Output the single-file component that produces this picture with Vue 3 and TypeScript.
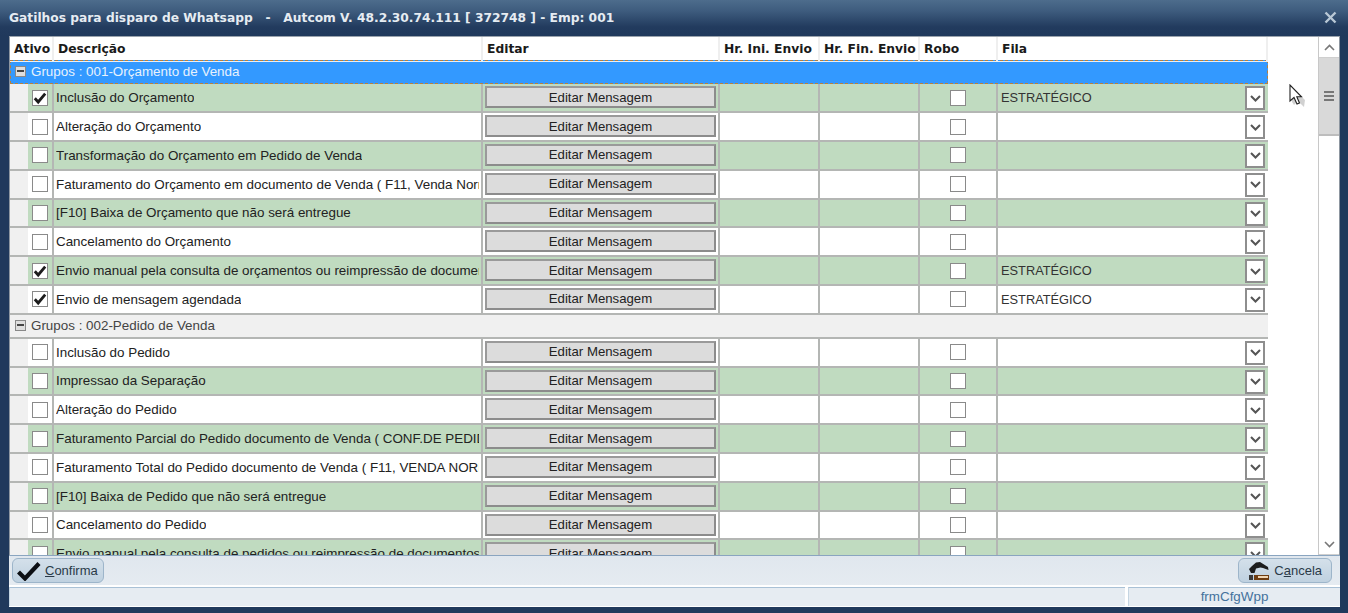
<script setup lang="ts">
interface Row {
  ativo: boolean
  text: string
  fila: string
}
interface Group {
  title: string
  selected: boolean
  firstGreen: boolean
  rows: Row[]
}

const columns = ['Descrição', 'Editar', 'Hr. Ini. Envio', 'Hr. Fin. Envio', 'Robo', 'Fila']

const groups: Group[] = [
  {
    title: 'Grupos : 001-Orçamento de Venda',
    selected: true,
    firstGreen: true,
    rows: [
      { ativo: true, text: 'Inclusão do Orçamento', fila: 'ESTRATÉGICO' },
      { ativo: false, text: 'Alteração do Orçamento', fila: '' },
      { ativo: false, text: 'Transformação do Orçamento em Pedido de Venda', fila: '' },
      { ativo: false, text: 'Faturamento do Orçamento em documento de Venda ( F11, Venda Normal )', fila: '' },
      { ativo: false, text: '[F10] Baixa de Orçamento que não será entregue', fila: '' },
      { ativo: false, text: 'Cancelamento do Orçamento', fila: '' },
      { ativo: true, text: 'Envio manual pela consulta de orçamentos ou reimpressão de documentos', fila: 'ESTRATÉGICO' },
      { ativo: true, text: 'Envio de mensagem agendada', fila: 'ESTRATÉGICO' },
    ],
  },
  {
    title: 'Grupos : 002-Pedido de Venda',
    selected: false,
    firstGreen: false,
    rows: [
      { ativo: false, text: 'Inclusão do Pedido', fila: '' },
      { ativo: false, text: 'Impressao da Separação', fila: '' },
      { ativo: false, text: 'Alteração do Pedido', fila: '' },
      { ativo: false, text: 'Faturamento Parcial do Pedido documento de Venda ( CONF.DE PEDIDO )', fila: '' },
      { ativo: false, text: 'Faturamento Total do Pedido documento de Venda ( F11, VENDA NORMAL )', fila: '' },
      { ativo: false, text: '[F10] Baixa de Pedido que não será entregue', fila: '' },
      { ativo: false, text: 'Cancelamento do Pedido', fila: '' },
      { ativo: false, text: 'Envio manual pela consulta de pedidos ou reimpressão de documentos', fila: '' },
    ],
  },
]

const isGreen = (g: Group, i: number) => (i % 2 === 0) === g.firstGreen
</script>

<template>
  <div class="window">
    <header class="titlebar">
      <span class="title">Gatilhos para disparo de Whatsapp &nbsp; - &nbsp; Autcom V. 48.2.30.74.111 [ 372748 ] - Emp: 001</span>
      <svg class="close" width="13" height="13" viewBox="0 0 13 13">
        <path d="M1.5 1.5 11.5 11.5M11.5 1.5 1.5 11.5" stroke="#b9c8d6" stroke-width="2.4" fill="none" />
      </svg>
    </header>

    <main class="body">
      <div class="grid-area">
        <div class="grid">
          <div class="row head">
            <div class="cell ativo-head">Ativo</div>
            <div v-for="c in columns" :key="c" class="cell">{{ c }}</div>
          </div>

          <template v-for="g in groups" :key="g.title">
            <div class="group" :class="{ selected: g.selected }">
              <span class="toggle"><i></i></span>
              {{ g.title }}
            </div>
            <div v-for="(r, i) in g.rows" :key="r.text" class="row item" :class="{ green: isGreen(g, i) }">
              <div class="indent"></div>
              <div class="cell check-cell">
                <span class="check">
                  <svg v-if="r.ativo" width="14" height="14" viewBox="0 0 14 14">
                    <path d="M1.8 7.2 5.2 11 12.2 2.6" stroke="#1c1c1c" stroke-width="2.8" fill="none" />
                  </svg>
                </span>
              </div>
              <div class="cell desc"><span>{{ r.text }}</span></div>
              <div class="cell edit"><button class="edit-btn">Editar Mensagem</button></div>
              <div class="cell"></div>
              <div class="cell"></div>
              <div class="cell center"><span class="check"></span></div>
              <div class="cell fila">
                <span>{{ r.fila }}</span>
                <span class="combo">
                  <svg width="11" height="7" viewBox="0 0 11 7">
                    <path d="M1 1 5.5 5.5 10 1" stroke="#555" stroke-width="2" fill="none" />
                  </svg>
                </span>
              </div>
            </div>
          </template>
        </div>

        <div class="scrollbar">
          <span class="arrow">
            <svg width="11" height="7" viewBox="0 0 11 7"><path d="M1 6 5.5 1.5 10 6" stroke="#777" stroke-width="1.6" fill="none" /></svg>
          </span>
          <span class="thumb"><i></i><i></i><i></i></span>
          <span class="track"></span>
          <span class="arrow">
            <svg width="11" height="7" viewBox="0 0 11 7"><path d="M1 1 5.5 5.5 10 1" stroke="#777" stroke-width="1.6" fill="none" /></svg>
          </span>
        </div>

        <svg class="cursor" width="18" height="24" viewBox="0 0 18 24">
          <path d="M3 3 16 16 15 23 9 17 5 21 3 18Z" fill="#000" opacity=".18" />
          <path d="M1 1V17L5 13.5 8 20 10.5 19 7.8 12.8H12.5Z" fill="#fff" stroke="#222" stroke-width="1.1" />
        </svg>
      </div>

      <div class="actions">
        <button class="action confirm">
          <svg width="24" height="20" viewBox="0 0 24 20">
            <path d="M1.5 11 8 17.5 22 2.5" stroke="#0c0f14" stroke-width="4.2" fill="none" />
          </svg>
          <span><u>C</u>onfirma</span>
        </button>
        <button class="action cancel">
          <svg width="22" height="20" viewBox="0 0 22 20">
            <path d="M1 8 4 5 8 1.5 12 1 20 6 20.5 9 15 7 12.5 6.5 8 7.5 6.5 12 3 12Z" fill="#1c1c1c" />
            <rect x="1" y="14" width="4" height="5" fill="#3a3a3a" />
            <rect x="6" y="14" width="15" height="5" fill="#6e3d12" />
            <rect x="10" y="15" width="10" height="2" fill="#f0d6b4" />
          </svg>
          <span>C<u>a</u>ncela</span>
        </button>
      </div>

      <footer class="status">
        <div class="status-main"></div>
        <div class="status-form">frmCfgWpp</div>
      </footer>
    </main>
  </div>
</template>

<style scoped>
.window {
  height: 613px;
  display: flex;
  flex-direction: column;
  box-sizing: border-box;
  padding: 0 8px 6px 9px;
  background: #20395c;
  font-family: "Liberation Sans", Arial, sans-serif;
  font-size: 13.4px;
  color: #222;
  overflow: hidden;
}

.titlebar {
  height: 36px;
  flex: none;
  margin: 0 -8px 0 -9px;
  padding: 0 11px 1px 9px;
  display: flex;
  align-items: center;
  justify-content: space-between;
  box-sizing: border-box;
  background: linear-gradient(#4d6c8c, #3e5c7e 30%, #223b5e 75%, #20395c);
}

.title {
  color: #e6ecf2;
  font-family: "DejaVu Sans", sans-serif;
  font-weight: bold;
  font-size: 12.25px;
  white-space: pre;
}

.body {
  flex: 1;
  min-height: 0;
  display: flex;
  flex-direction: column;
}

.grid-area {
  position: relative;
  height: 519px;
  flex: none;
  display: flex;
  background: #fff;
  overflow: hidden;
  border-top: 1px solid #9aa3ad;
  border-left: 1px solid #8d96a0;
  border-right: 1px solid #8d96a0;
  box-sizing: border-box;
}

.grid {
  width: 1258px;
  flex: none;
  margin-right: 50px;
}

.row {
  display: grid;
  grid-template-columns: 44px 429px 237px 100px 100px 78px 270px;
}

.head {
  height: 23px;
  font-family: "DejaVu Sans", sans-serif;
  font-weight: bold;
  font-size: 12.3px;
  color: #1a1a1a;
  background: #fff;
}

.head .cell {
  padding-left: 4px;
  line-height: 24px;
  white-space: nowrap;
  border-right: 2px solid #efefef;
  border-bottom: 1px solid #efefef;
}

.cell {
  box-sizing: border-box;
  min-width: 0;
  border-right: 2px solid #b4b6b4;
}

.group {
  height: 24px;
  box-sizing: border-box;
  display: flex;
  align-items: center;
  gap: 5px;
  padding-left: 5px;
  padding-bottom: 1px;
  color: #444;
  background: #f0f0f0;
  border-bottom: 2px solid #b4b6b4;
}

.group.selected {
  height: 24.4px;
  padding-left: 4px;
  padding-bottom: 2px;
  background: #3399ff;
  color: #e8f2fc;
  border: 1px dashed #b5803f;
}

.toggle {
  width: 11px;
  height: 11px;
  box-sizing: border-box;
  display: flex;
  align-items: center;
  justify-content: center;
  background: #dedede;
  border: 1px solid #888;
}

.toggle i {
  width: 7px;
  height: 2px;
  background: #444;
}

.item {
  position: relative;
  height: 28.8px;
  grid-template-columns: 18px 26px 429px 237px 100px 100px 78px 270px;
  background: #fff;
  box-sizing: border-box;
  border-bottom: 2px solid #b4b6b4;
}

.item.green {
  background: #c0dbc0;
}

.indent {
  background: #f0f0f0;
}

.check-cell,
.center {
  display: flex;
  align-items: center;
  justify-content: center;
}

.check {
  width: 16px;
  height: 16px;
  box-sizing: border-box;
  display: flex;
  align-items: center;
  justify-content: center;
  background: #fff;
  border: 1.5px solid #8a8a8a;
}

.desc {
  display: flex;
  align-items: center;
  padding: 0 2px;
  white-space: nowrap;
}

.desc span {
  overflow: hidden;
}

.edit {
  padding: 2px;
}

.edit-btn {
  display: block;
  width: 231px;
  height: 22px;
  padding: 0;
  font: inherit;
  font-size: 13.2px;
  color: #222;
  background: #dcdcdc;
  border: 2px solid #8c8c8c;
  border-top-color: #9a9a9a;
  border-left-color: #9a9a9a;
}

.fila {
  position: relative;
  display: flex;
  align-items: center;
  padding-left: 3px;
  border-right: none;
  color: #333;
  font-size: 12.8px;
}

.combo {
  position: absolute;
  right: 3px;
  top: 2px;
  width: 20px;
  height: 24px;
  box-sizing: border-box;
  display: flex;
  align-items: center;
  justify-content: center;
  background: #fff;
  border: 2px solid #8e8e8e;
}

.scrollbar {
  width: 21px;
  flex: none;
  display: flex;
  flex-direction: column;
  border-left: 1px solid #c8c8c8;
  box-sizing: border-box;
}

.arrow {
  height: 20px;
  flex: none;
  display: flex;
  align-items: center;
  justify-content: center;
  background: #fff;
  border-bottom: 1px solid #cfcfcf;
}

.thumb {
  height: 76px;
  flex: none;
  display: flex;
  flex-direction: column;
  align-items: center;
  justify-content: center;
  gap: 2px;
  background: #d9d9d9;
  border-bottom: 2px solid #bdbdbd;
}

.thumb i {
  width: 10px;
  height: 2px;
  background: #777;
}

.track {
  flex: 1;
  background: #fff;
}

.cursor {
  position: absolute;
  left: 1279px;
  top: 47px;
}

.actions {
  height: 31px;
  flex: none;
  display: flex;
  align-items: center;
  justify-content: space-between;
  padding: 0 8px 0 3px;
  background: linear-gradient(#e0e7ee, #e5ebf1);
  border-top: 1px solid #8aa5c0;
  border-bottom: 1px solid #fff;
  box-sizing: border-box;
}

.action {
  display: flex;
  align-items: center;
  gap: 4px;
  height: 25px;
  padding: 0 5px 0 4px;
  font: inherit;
  font-size: 13px;
  color: #2a3a48;
  background: linear-gradient(#d4e0ea, #bfd1e0);
  border: 1px solid #9db5ca;
  border-radius: 6px;
}

.action.cancel {
  padding: 0 9px;
}

.status {
  flex: 1;
  display: grid;
  grid-template-columns: 1116px 1fr;
  gap: 3px;
  background: #fff;
  padding: 1px 0;
  box-sizing: border-box;
}

.status-main,
.status-form {
  background: #e6ecf2;
  border-top: 1px solid #a9c1d6;
  border-left: 1px solid #c5d5e2;
}

.status-form {
  text-align: center;
  line-height: 18px;
  color: #44729c;
}
</style>
